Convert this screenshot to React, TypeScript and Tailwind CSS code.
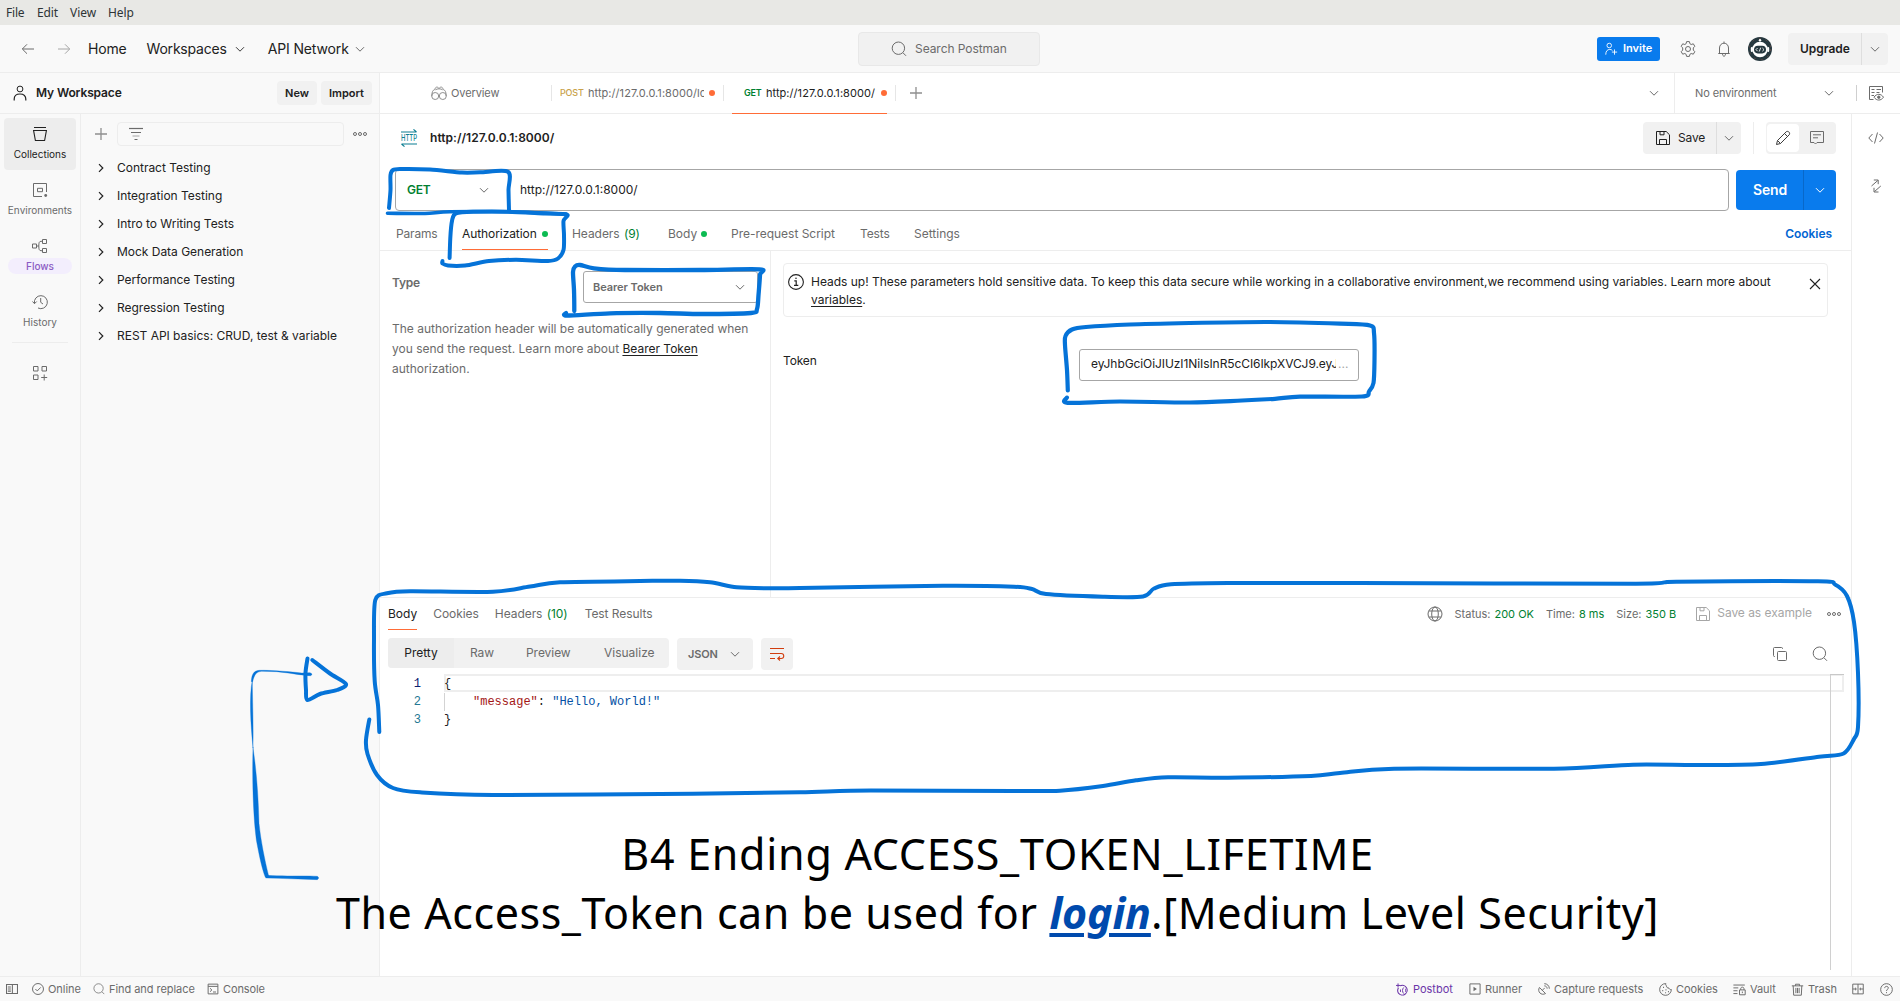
import type { ReactNode } from "react";

type Point = [number, number];

/* Smooth curve through a list of points (Catmull-Rom turned into Béziers). */
function curve(points: Point[]): string {
  let d = `M${points[0][0]} ${points[0][1]}`;
  for (let i = 0; i < points.length - 1; i++) {
    const a = points[Math.max(i - 1, 0)];
    const b = points[i];
    const c = points[i + 1];
    const e = points[Math.min(i + 2, points.length - 1)];
    const t = 7;
    d += ` C${(b[0] + (c[0] - a[0]) / t).toFixed(1)} ${(b[1] + (c[1] - a[1]) / t).toFixed(1)} ${(c[0] - (e[0] - b[0]) / t).toFixed(1)} ${(c[1] - (e[1] - b[1]) / t).toFixed(1)} ${c[0]} ${c[1]}`;
  }
  return d;
}

function Icon({ size = 16, className = "", children }: { size?: number; className?: string; children: ReactNode }) {
  return (
    <svg width={size} height={size} viewBox="0 0 16 16" fill="none" stroke="currentColor" strokeWidth={1} className={`shrink-0 ${className}`}>
      {children}
    </svg>
  );
}

const ChevronDown = ({ className = "" }: { className?: string }) => (
  <Icon className={className}><path d="M4 6.2 8 10.2 12 6.2" /></Icon>
);
const ChevronRight = () => (
  <Icon className="text-[#212121]"><path d="M6 4.2 9.8 8 6 11.8" strokeWidth={1.2} /></Icon>
);
const Plus = () => (
  <Icon className="text-[#8f8f8f]"><path d="M8 2v12M2 8h12" strokeWidth={1.3} /></Icon>
);
const Dots = ({ className = "" }: { className?: string }) => (
  <Icon className={className}><circle cx="3" cy="8" r="1.5" /><circle cx="8" cy="8" r="1.5" /><circle cx="13" cy="8" r="1.5" /></Icon>
);
const Magnifier = ({ size = 16, className = "" }: { size?: number; className?: string }) => (
  <Icon size={size} className={className}><circle cx="7.4" cy="7.2" r="6.2" /><path d="m12 11.8 3 3" /></Icon>
);
const Floppy = ({ className = "" }: { className?: string }) => (
  <Icon className={className}><path d="M1.5 1.5h9.7l3.3 3.3v9.7h-13zM5 1.5v3.3h4V1.5M4.5 14.5v-5h7v5" /></Icon>
);

const collections = [
  "Contract Testing",
  "Integration Testing",
  "Intro to Writing Tests",
  "Mock Data Generation",
  "Performance Testing",
  "Regression Testing",
  "REST API basics: CRUD, test & variable",
];

function MenuBar() {
  return (
    <div className="flex h-[25px] shrink-0 items-center bg-[#e8e8e5] pl-[6px] font-['Noto_Sans',sans-serif] text-xs text-[#2e3436]">
      <span className="w-[31px] tracking-[-0.2px]">File</span>
      <span className="w-[33px] tracking-[-0.1px]">Edit</span>
      <span className="w-[38px]">View</span>
      <span className="tracking-[-0.1px]">Help</span>
    </div>
  );
}

function TopNav() {
  return (
    <header className="flex h-12 shrink-0 items-center border-b border-[#ededed] bg-[#f9f9f9] text-[14px] text-[#212121]">
      <div className="flex w-[858px] items-center pl-5">
        <Icon className="text-[#6b6b6b]"><path d="M14 8H2.5M7 3.3 2.3 8 7 12.7" /></Icon>
        <Icon className="ml-5 text-[#a6a6a6]"><path d="M2 8h11.5M9 3.3 13.7 8 9 12.7" /></Icon>
        <span className="ml-4 tracking-[-0.18px]">Home</span>
        <span className="ml-5 tracking-[-0.2px]">Workspaces</span>
        <ChevronDown className="ml-[5px] text-[#3b3b3b]" />
        <span className="ml-5 tracking-[-0.14px]">API Network</span>
        <ChevronDown className="ml-[3px] text-[#6b6b6b]" />
      </div>
      <div className="flex h-[34px] w-[182px] items-center rounded border border-[#e8e8e8] bg-[#f1f1f1] pl-8 text-xs text-[#6b6b6b]">
        <Magnifier />
        <span className="ml-2 tracking-[-0.06px]">Search Postman</span>
      </div>
      <div className="flex flex-1 items-center justify-end pr-3">
        <div className="flex h-6 w-[63px] items-center rounded-[3px] bg-[#097bed] pl-[7px] text-[11px] font-semibold text-white">
          <Icon size={14} className="mr-[5px]">
            <circle cx="6" cy="4" r="2.6" /><path d="M2 14.5c0-4 1.8-6 4.6-6 1.3 0 2.3.4 3 1.2M12 8.5v6M9 11.5h6" />
          </Icon>
          Invite
        </div>
        <Icon className="ml-5 text-[#6b6b6b]">
          <path d="M6.6.6h2.8l.5 2.1 1.3.8 2.1-.7 1.5 2.500L13.300 6.900v2.200l1.500 1.600-1.500 2.500-2.100-.7-1.300.8-.5 2.100H6.600l-.5-2.100-1.300-.8-2.100.7-1.500-2.500L2.700 9.100V6.900L1.200 5.300l1.500-2.500 2.100.7 1.300-.8z" />
          <circle cx="8" cy="8" r="2.5" />
        </Icon>
        <Icon className="ml-5 text-[#6b6b6b]">
          <path d="M2.300 12.500h11.400M3.500 12.500V7C3.500 4.200 5.500 2.200 8 2.200s4.500 2 4.500 4.800v5.500M8 2.200V.5M6.500 12.800c0 3.200 3 3.200 3 0" />
        </Icon>
        <svg width="24" height="24" viewBox="0 0 24 24" className="ml-4">
          <circle cx="12" cy="12" r="12" fill="#26383f" />
          <circle cx="12" cy="12" r="10.7" fill="none" stroke="#7a5048" strokeWidth="0.6" strokeDasharray="2 5" />
          <circle cx="12" cy="12.500" r="7.800" fill="#fff" />
          <circle cx="12" cy="3.300" r="1.200" fill="#fff" />
          <rect x="2.800" y="10" width="2" height="5" rx="1" fill="#fff" />
          <rect x="19.200" y="10" width="2" height="5" rx="1" fill="#fff" />
          <rect x="6" y="8.800" width="12" height="7.600" rx="3.800" fill="#26383f" />
          <path d="m9.600 11-1.600 1.600 1.600 1.600M14.400 11l1.600 1.600-1.600 1.600M12.700 10.700l-1.400 3.800" fill="none" stroke="#fff" strokeWidth="0.900" />
        </svg>
        <div className="ml-4 flex h-8 w-[100px] items-center rounded bg-[#f1f1f1]">
          <span className="flex h-8 w-[74px] items-center border-r border-[#dedede] pl-3 text-xs font-semibold">Upgrade</span>
          <ChevronDown className="ml-[5px] text-[#6b6b6b]" />
        </div>
      </div>
    </header>
  );
}

function TabBar() {
  return (
    <div className="flex h-[41px] shrink-0 text-[11px] text-[#6b6b6b]">
      <div className="flex w-[380px] items-center border-r border-b border-[#ededed] bg-[#f9f9f9] pl-3 text-[#212121]">
        <Icon><circle cx="8" cy="4" r="2.900" /><path d="M2.200 15.500v-1.500c0-3.500 2.300-5 5.800-5s5.800 1.500 5.800 5v1.500" strokeWidth={1.200} /></Icon>
        <span className="ml-2 text-xs font-semibold tracking-[-0.12px]">My Workspace</span>
        <span className="mr-1 ml-auto flex h-6 w-10 items-center justify-center rounded bg-[#f1f1f1] font-semibold">New</span>
        <span className="mr-[7px] flex h-6 w-[51px] items-center justify-center rounded bg-[#f1f1f1] font-semibold">Import</span>
      </div>
      <div className="flex flex-1 items-center border-b border-[#ededed] bg-white">
        <div className="flex h-4 w-[172px] items-center border-r border-[#e6e6e6] pl-[51px]">
          <Icon className="mr-1 text-[#8f8f8f]">
            <path d="M.8 11c0-4 1-6 3-6.500M15.200 11c0-4-1-6-3-6.500M4 4.500C4 1.500 7 1.500 8 3.500c1-2 4-2 4 1M4.500 4.800c1.500-1.300 5.500-1.300 7 0" />
            <circle cx="4.200" cy="11" r="3.500" /><circle cx="11.800" cy="11" r="3.500" />
          </Icon>
          <span className="tracking-[-0.1px]">Overview</span>
        </div>
        <div className="flex h-4 w-[172px] items-center border-r border-[#e6e6e6] pl-2">
          <span className="w-[28px] text-[9px] font-medium tracking-[-0.15px] text-[#c9a24a]">POST</span>
          <span className="w-[116px] overflow-hidden whitespace-nowrap tracking-[0.050px]">http://127.0.0.1:8000/login</span>
          <span className="ml-[5px] size-1.5 rounded-full bg-[#ff6c37]" />
        </div>
        <div className="relative flex h-4 w-[172px] items-center border-r border-[#e6e6e6] pl-5">
          <span className="w-[22px] text-[9px] font-semibold tracking-[-0.2px] text-[#007f31]">GET</span>
          <span className="w-[110px] tracking-[0.050px] whitespace-nowrap text-[#212121]">http://127.0.0.1:8000/</span>
          <span className="ml-[5px] size-1.5 rounded-full bg-[#ff6c37]" />
          <span className="absolute top-[28px] left-2 h-px w-[155px] bg-[#ff6c37]" />
        </div>
        <span className="ml-3"><Plus /></span>
        <ChevronDown className="ml-auto text-[#6b6b6b]" />
        <div className="ml-3 flex h-10 w-[226px] items-center border-l border-[#ededed] pl-5">
          <span className="tracking-[-0.1px]">No environment</span>
          <ChevronDown className="ml-[45px]" />
          <span className="ml-[19px] h-4 w-px bg-[#cfcfcf]" />
          <Icon className="ml-[11px]">
            <path d="M5.500 14.500h-4v-13h13v6M3.500 4.500h3M8.500 4.500h4.500M3.500 7.500h3M8.500 7.500h3M3.500 10.500h2.500" />
            <path d="M6 12.200c2.500-3.800 7-3.800 9.500 0-2.500 3.800-7 3.800-9.500 0z" /><circle cx="10.800" cy="12.200" r="1.200" fill="currentColor" />
          </Icon>
        </div>
      </div>
    </div>
  );
}

function RailItem({ label, children }: { label: string; children: ReactNode }) {
  return (
    <div className="mb-1 flex h-[52px] w-[72px] flex-col items-center rounded pt-2">
      <Icon>{children}</Icon>
      <span className="mt-1 text-[10px] leading-4">{label}</span>
    </div>
  );
}

function LeftRail() {
  return (
    <nav className="flex w-[81px] shrink-0 flex-col items-center border-r border-[#ededed] bg-[#f9f9f9] pt-1 text-[#6b6b6b]">
      <div className="mb-1 flex h-[52px] w-[72px] flex-col items-center rounded bg-[#ededed] pt-2 text-[#212121]">
        <Icon><path d="M2 1.500h12M1 4.500h14M1.600 4.700 3.400 14.500h9.200l1.800-9.800" strokeWidth={1.100} /></Icon>
        <span className="mt-1 text-[10px] leading-4">Collections</span>
      </div>
      <RailItem label="Environments">
        <path d="M10 14.500H1.500v-13h13V10M5.500 6.300h5v3.400h-5z" /><circle cx="13.700" cy="13.500" r="1.400" fill="currentColor" stroke="none" />
      </RailItem>
      <div className="mb-1 flex h-[52px] w-[72px] flex-col items-center pt-2">
        <Icon><path d="M.5 6h4v4h-4zM10.500 1.500h4v4h-4zM10.500 10.500h4v4h-4zM10.500 3.300H9C7.300 3.300 6.800 4.500 6.800 8S7.300 12.700 9 12.700h1.500M4.500 8h2.300" /></Icon>
        <span className="mt-1 flex h-4 w-16 items-center justify-center rounded-full bg-[#f3eefd] text-[10px] font-medium text-[#8b5bc4]">Flows</span>
      </div>
      <RailItem label="History">
        <path d="M2.500 9.500A6.500 6.500 0 1 1 6 14M.5 7.500l2 2.200 2.200-2.200M8.700 4v4.300l2.300 1.700" />
      </RailItem>
      <div className="h-px w-14 bg-[#ededed]" />
      <Icon className="mt-[22px]"><path d="M1.500 1.500h4.500v4.500h-4.500zM10 1.500h4.500v4.500h-4.500zM1.500 10h4.500v4.500h-4.500zM12.200 9.500v6M9.200 12.500h6" /></Icon>
    </nav>
  );
}

function Sidebar() {
  return (
    <aside className="flex w-[299px] shrink-0 flex-col border-r border-[#ededed] bg-[#f9f9f9] text-xs text-[#212121]">
      <div className="mt-2 mb-2 flex h-6 items-center pl-3">
        <Plus />
        <div className="ml-2 flex h-6 w-[227px] items-center rounded-sm border border-[#ededed] pl-[10px]">
          <Icon className="text-[#6b6b6b]"><path d="M1 2.500h14" strokeWidth={1.200} /><path d="M3 6.500h10" /><path d="M4.500 10h7" stroke="#a6a6a6" /><path d="M6.500 13.500h3" /></Icon>
        </div>
        <Dots className="ml-2 text-[#6b6b6b]" />
      </div>
      {collections.map((name) => (
        <div key={name} className="flex h-7 items-center pl-3">
          <ChevronRight />
          <span className="ml-2 tracking-[-0.020px]">{name}</span>
        </div>
      ))}
    </aside>
  );
}

function RequestBuilder() {
  return (
    <>
      <div className="flex h-12 items-center pr-[15px] pl-[21px]">
        <svg width="16" height="18" viewBox="0 0 16 18" className="overflow-visible text-[#0b7d91]">
          <g fill="none" stroke="currentColor" strokeWidth="1.100">
            <path d="M0 3h15.500M12.500.3l3 2.700M16 15H.5M3.500 17.700l-3-2.700" />
          </g>
          <text x="0" y="12.300" fontSize="9" textLength="16" lengthAdjust="spacingAndGlyphs" fill="currentColor" className="font-['Inter'] font-medium">HTTP</text>
        </svg>
        <span className="ml-[13px] text-xs font-semibold tracking-[0.030px] text-[#212121]">http://127.0.0.1:8000/</span>
        <div className="ml-auto flex h-8 w-[98px] items-center rounded bg-[#f1f1f1] text-xs text-[#212121]">
          <span className="flex h-8 w-[74px] items-center border-r border-[#dedede] pl-3"><Floppy /><span className="ml-[7px] tracking-[-0.15px]">Save</span></span>
          <ChevronDown className="ml-1 text-[#6b6b6b]" />
        </div>
        <span className="mx-3 h-8 w-px bg-[#ededed]" />
        <div className="flex h-8 w-[70px] items-center rounded bg-[#f1f1f1] pl-px">
          <span className="flex h-7 w-8 items-center justify-center rounded bg-white text-[#3b3b3b]">
            <Icon><path d="M1.500 14.500 2.500 10.500 11.300 1.700c1.800-1.200 4.200 1 3 3L5.500 13.500zM9.500 3.500l3 3M2.500 10.500l3 3" /></Icon>
          </span>
          <Icon className="ml-[10px] text-[#6b6b6b]"><path d="M1.500 1.500h13v11H8l-1.500 1.500L5 12.500H1.500zM4 4.800h8M4 7.800h5" /></Icon>
        </div>
      </div>

      <div className="mt-[7px] flex h-[42px] items-center pr-[15px] pl-[15px]">
        <div className="flex h-[42px] w-[1334px] items-center rounded-[4px] border border-[#a6a6a6] bg-white">
          <span className="flex w-[95px] items-center pl-[11px] text-xs font-semibold tracking-[-0.300px] text-[#007f31]">GET<ChevronDown className="ml-[46px] text-[#6b6b6b]" /></span>
          <span className="ml-[29px] text-xs text-[#212121]">http://127.0.0.1:8000/</span>
        </div>
        <div className="ml-auto flex h-10 w-[100px] items-center rounded bg-[#097bed] text-white">
          <span className="flex h-10 w-[68px] items-center border-r border-[#0868c9] pl-[17px] text-sm font-semibold tracking-[-0.170px]">Send</span>
          <ChevronDown className="ml-2" />
        </div>
      </div>

      <div className="flex h-10 items-center border-b border-[#ededed] pt-[6px] pr-[19px] pl-4 text-xs text-[#6b6b6b]">
        <span className="w-[66px] tracking-[-0.170px]">Params</span>
        <span className="relative flex w-[110px] items-center">
          <span className="tracking-[-0.080px] text-[#212121]">Authorization</span>
          <span className="ml-[5px] size-1.5 rounded-full bg-[#0cbb52]" />
          <span className="absolute top-[23px] left-0 h-px w-[86px] bg-[#ff6c37]" />
        </span>
        <span className="w-[96px] tracking-[-0.060px]">Headers <span className="ml-px text-[#007f31]">(9)</span></span>
        <span className="flex w-[63px] items-center">Body<span className="ml-[4px] size-1.5 rounded-full bg-[#0cbb52]" /></span>
        <span className="w-[129px] tracking-[-0.020px]">Pre-request Script</span>
        <span className="w-[54px] tracking-[-0.100px]">Tests</span>
        <span>Settings</span>
        <span className="ml-auto font-semibold tracking-[-0.060px] text-[#0265d2]">Cookies</span>
      </div>
    </>
  );
}

function AuthPanel() {
  return (
    <div className="flex h-[346px] shrink-0">
      <div className="w-[391px] border-r border-[#ededed] pt-5 pl-3 text-xs text-[#6b6b6b]">
        <div className="flex h-8 justify-between pr-3">
          <span className="mt-1 font-semibold tracking-[-0.200px]">Type</span>
          <div className="flex w-[175px] items-center rounded-[3px] border border-[#a6a6a6] pl-[9px] text-[11px] font-semibold tracking-[-0.050px]">
            Bearer Token
            <ChevronDown className="ml-auto mr-[9px]" />
          </div>
        </div>
        <p className="mt-4 w-[366px] leading-5">
          The authorization header will be automatically generated when you send the request. Learn more about <span className="text-[#212121] underline underline-offset-2">Bearer Token</span> authorization.
        </p>
      </div>
      <div className="flex-1 pt-3 pl-3 text-xs text-[#212121]">
        <div className="flex h-[54px] w-[1045px] rounded border border-[#ededed] pt-[9px] pl-1">
          <Icon className="mt-px"><circle cx="8" cy="8" r="7.400" strokeWidth={1.100} /><path d="M6.300 6.800H8.200v4.500M6 11.400h4.300" strokeWidth={1.200} /><circle cx="8" cy="4.300" r=".8" fill="currentColor" stroke="none" /></Icon>
          <p className="ml-[7px] w-[970px] leading-[18px] tracking-[-0.017px]">
            Heads up! These parameters hold sensitive data. To keep this data secure while working in a collaborative environment,we recommend using variables. Learn more about <span className="underline underline-offset-2">variables</span>.
          </p>
          <Icon className="mt-[3px] mr-1 ml-auto"><path d="m3 3 10 10M13 3 3 13" strokeWidth={1.100} /></Icon>
        </div>
        <div className="mt-8 flex h-8 items-start">
          <span className="mt-1 w-[296px] tracking-[-0.160px]">Token</span>
          <div className="flex h-8 w-[280px] items-center rounded-[3px] border border-[#a6a6a6] bg-white pb-0.5 pl-[11px]">
            <span className="w-[245px] overflow-hidden whitespace-nowrap tracking-[-0.080px]">eyJhbGciOiJIUzI1NiIsInR5cCI6IkpXVCJ9.eyJ</span>
            <span className="ml-0.5 text-[#a6a6a6]">...</span>
          </div>
        </div>
      </div>
    </div>
  );
}

function ResponsePanel() {
  return (
    <section className="flex flex-1 flex-col border-t border-[#ededed] text-xs text-[#6b6b6b]">
      <div className="flex h-8 shrink-0 items-center pr-[9px] pl-2">
        <span className="relative mr-4 text-[#212121]">Body<span className="absolute top-[23px] left-0 h-px w-[29px] bg-[#ff6c37]" /></span>
        <span className="mr-4 tracking-[-0.050px]">Cookies</span>
        <span className="mr-[17px] tracking-[-0.060px]">Headers <span className="ml-px text-[#007f31]">(10)</span></span>
        <span className="tracking-[-0.070px]">Test Results</span>
        <div className="ml-auto flex items-center text-[11px]">
          <Icon className="mr-3">
            <circle cx="8" cy="8" r="7" /><ellipse cx="8" cy="8" rx="3.300" ry="7" /><path d="M1.800 5h12.400M1.800 11h12.400" />
          </Icon>
          Status:<span className="mr-3 ml-1 text-[#007f31]">200 OK</span>
          Time:<span className="mr-3 ml-1 text-[#007f31]">8 ms</span>
          Size:<span className="mr-[19px] ml-1 text-[#007f31]">350 B</span>
          <Floppy className="text-[#a6a6a6]" />
          <span className="-mt-0.5 ml-[6px] text-xs tracking-[-0.040px] text-[#a6a6a6]">Save as example</span>
          <Dots className="ml-[14px]" />
        </div>
      </div>

      <div className="mt-2 flex h-8 shrink-0 items-start pr-[23px] pl-2">
        <div className="flex h-[30px] items-center overflow-hidden rounded bg-[#f1f1f1]">
          <span className="flex h-[30px] w-[66px] items-center justify-center bg-[#ededed] text-[#212121]">Pretty</span>
          <span className="w-[56px] pl-4 tracking-[-0.050px]">Raw</span>
          <span className="w-[78px] pl-4 tracking-[-0.050px]">Preview</span>
          <span className="w-[81px] pl-4">Visualize</span>
        </div>
        <div className="ml-2 flex h-8 w-[76px] items-center rounded bg-[#f1f1f1] pl-[11px] text-[11px] font-semibold tracking-[-0.200px]">
          JSON<ChevronDown className="ml-[9px]" />
        </div>
        <div className="ml-2 flex h-8 w-8 items-center justify-center rounded bg-[#f1f1f1] text-[#d13d0e]">
          <Icon><path d="M1 2.500h14M1 7.500h11.200c3.400 0 3.400 5 0 5H9M1 12.500h5M11 10.500l-2.200 2 2.200 2" strokeWidth={1.100} /></Icon>
        </div>
        <Icon className="mt-2 ml-auto"><rect x="5.500" y="5.500" width="9" height="9" rx="1" /><path d="M3 10.500H2.500a1 1 0 0 1-1-1v-7a1 1 0 0 1 1-1h7a1 1 0 0 1 1 1V3" /></Icon>
        <Magnifier className="mt-2 ml-6" />
      </div>

      <div className="mt-1 flex flex-1 font-['Liberation_Mono',monospace] leading-[18px]">
        <div className="w-11 pt-px pr-[3px] text-right text-[#237893]">
          <div className="text-[#0b216f]">1</div>
          <div>2</div>
          <div>3</div>
        </div>
        <div className="relative ml-5 w-[1400px] pt-px text-[#212121]">
          <div className="absolute top-0 left-0 h-[18px] w-[1400px] border-2 border-[#eeeeee]" />
          <div className="relative whitespace-pre">{"{"}</div>
          <div className="relative h-[18px] border-l border-[#d3d3d3] pl-[28px] whitespace-pre"><span className="text-[#a31515]">"message"</span>: <span className="text-[#0451a5]">"Hello, World!"</span></div>
          <div className="whitespace-pre">{"}"}</div>
          <div className="absolute top-0 left-[1386px] h-[296px] w-px bg-[#d0d0d0]" />
          <div className="absolute top-0 left-[1386px] h-px w-[14px] bg-[#c8c8c8]" />
        </div>
      </div>
    </section>
  );
}

function StatusBar() {
  return (
    <footer className="flex h-[25px] shrink-0 items-center border-t border-[#ededed] bg-[#f9f9f9] pr-[7px] pl-[6px] text-[11px] text-[#6b6b6b]">
      <Icon size={12}><path d="M.7 2h14.600v12H.7zM8.500 2v12M2.500 5.200h4M2.500 8h4M2.500 10.800h4" strokeWidth={1.400} /></Icon>
      <Icon size={12} className="mr-1 ml-[14px]"><circle cx="8" cy="8" r="7.300" strokeWidth={1.300} /><path d="m4.500 8 2.500 2.500 4.700-4.700" strokeWidth={1.300} /></Icon>
      <span className="w-[45px] tracking-[-0.050px]">Online</span>
      <Magnifier size={12} className="mr-1" />
      <span className="w-[98px] tracking-[-0.050px]">Find and replace</span>
      <Icon size={12} className="mr-[4px]"><path d="M1.500 1.500h13v13h-13zM1.500 4.500h13M4 7l2.500 2.300L4 11.600M8 12h4" strokeWidth={1.300} /></Icon>
      <span className="tracking-[-0.100px]">Console</span>

      <div className="ml-auto flex items-center">
        <Icon size={13} className="mr-[4px] text-[#6b35a8]">
          <path d="M5 3.500A6 6 0 1 1 3 12.500C1.800 10.500 1.800 8 3 6" strokeWidth={1.300} /><path d="M9.500 5.500C7.500 7.500 7.500 11 9.500 13M12 7v4M2.500.5v5M0 3h5M5.500 8v3" strokeWidth={1.200} />
        </Icon>
        <span className="w-[56px] text-[#6b35a8]">Postbot</span>
        <Icon size={12} className="mr-[4px]"><path d="M1.200 1.200h13.600v13.600H1.200z" strokeWidth={1.300} /><path d="M6 5v6l4.500-3z" fill="currentColor" stroke="none" /></Icon>
        <span className="w-[52px]">Runner</span>
        <Icon size={13} className="mr-[4px]"><path d="M3 5.500c-3 5 2 10.500 7.500 7.500zM6.500 9l3-3M9 3.500c2 0 3.500 1.500 3.500 3.500M9 .8c3.500 0 6.200 2.700 6.200 6.200" strokeWidth={1.200} /></Icon>
        <span className="w-[105px] tracking-[-0.030px]">Capture requests</span>
        <Icon size={13} className="mr-1"><path d="M8.500.8A7.200 7.200 0 1 0 15.200 8c-1.500.3-2.700-.4-2.900-1.800-2 .2-3.300-1-3-2.700C8 3 8 2 8.500.8z" strokeWidth={1.200} /><path d="M5 5.500h1.200M4 9.500h1.200M8 8.500h1.200M7.500 12h1.200M11 10.500h1.200" strokeWidth={1.500} /></Icon>
        <span className="w-[57px] tracking-[-0.050px]">Cookies</span>
        <Icon size={13} className="mr-1"><path d="M.5 2.500h14M.5 6h6M.5 9.500h5M.5 13h5M8 8.500h7v6H8zM9.500 8.500V7c0-2.500 4-2.500 4 0v1.500M11.500 10.500v2" strokeWidth={1.200} /></Icon>
        <span className="w-[41px] tracking-[-0.100px]">Vault</span>
        <Icon size={13} className="mr-1"><path d="M1 3.500h14M5.500 3.500v-2h5v2M2.700 3.500l.6 11.500h9.400l.6-11.500M6 6v6.500M8 6v6.500M10 6v6.500" strokeWidth={1.200} /></Icon>
        <span className="w-[44px]">Trash</span>
        <Icon size={12} className="mr-4"><path d="M1 1.500h14v13H1zM8 1.500v13M1 8h4.500M15 8h-4.500M4 6.300 5.800 8 4 9.700M12 6.300 10.200 8l1.800 1.700" strokeWidth={1.300} /></Icon>
        <Icon size={13}><circle cx="8" cy="8" r="7.200" strokeWidth={1.200} /><path d="M5.800 6.300c0-3 4.500-2.700 4.500-.2C10.300 7.700 8 7.800 8 9.800M8 11.200v1.300" strokeWidth={1.200} /></Icon>
      </div>
    </footer>
  );
}

const responseOutline: Point[] = [
  [379.3, 732], [378, 705], [374.7, 681], [374, 640], [375.3, 600], [387, 593.3], [410, 591.3], [493, 591.7], [530, 586.500], [560, 582.3], [640, 581], [680, 580.7], [710, 582.3],
  [736.7, 587.3], [770, 588.3], [800, 588], [943, 585.7], [1014, 586.7], [1032, 589], [1046, 594], [1103, 596.7], [1143, 596.5], [1154, 588.5], [1171, 584.3], [1228, 583], [1360, 583],
  [1636, 583.7], [1676, 581.7], [1818, 581.3], [1835, 584.5], [1847, 596], [1854, 622], [1858, 673], [1858, 727], [1854, 739], [1843.6, 753.5], [1819, 756.7], [1761, 764], [1697, 765],
  [1633, 764.7], [1554, 768.7], [1394, 768.7], [1340, 773], [1311, 776], [1228, 777.7], [1168, 777.3], [1136, 780.3], [1103, 786], [1060, 790.7], [1014, 791], [871, 790.5], [800, 792.3],
  [693, 793.7], [493, 795], [420, 792.3], [393, 788], [377, 775], [367.5, 754], [366, 740], [369.3, 719.5],
];

function Annotations() {
  return (
    <svg width="1900" height="1001" viewBox="0 0 1900 1001" fill="none" stroke="#0573d8" strokeWidth="4" strokeLinecap="round" strokeLinejoin="round" className="pointer-events-none absolute top-0 left-0">
      <path d={curve([[389, 208], [390.500, 190], [390.500, 175], [393, 170], [400, 169], [430, 169.500], [462, 172.500], [480, 172.300], [508, 171.700], [508.500, 190], [509, 210]])} />
      <path d={curve([[387.500, 213.300], [425, 213.500], [450, 211.700], [508, 211.800], [566, 214]])} strokeWidth="3.600" />
      <path d={curve([[449.600, 258], [450.300, 238], [452, 221], [456, 213.300], [475, 211.700], [508, 211.700], [545, 213.500], [567, 214.500], [563.500, 221], [564, 235], [563.500, 250], [558, 258.500], [548, 261], [516, 259.800], [489, 261], [465, 265.500], [448, 265.500], [442.500, 263.500], [442.500, 261]])} />
      <path d={curve([[574.300, 311], [574, 290], [573, 272], [575, 266.500], [580, 265], [594, 268.300], [625, 270], [700, 270], [759.500, 269.300], [760, 275], [758.500, 295], [757, 309], [751, 313], [702, 314], [660, 313], [610, 313.300], [567, 315.500], [566, 313]])} strokeWidth="4.300" />
      <path d={curve([[1067.800, 390.500], [1067, 370], [1065, 345], [1065.500, 336], [1072, 329.500], [1086, 327], [1130, 324.500], [1190, 323], [1270, 322], [1340, 323.700], [1370, 325.500], [1374, 333], [1374.500, 360], [1373.500, 383], [1369, 391.500], [1362, 396.500], [1300, 396.700], [1275, 398.800], [1242, 400.500], [1190, 402.500], [1120, 401.500], [1067.500, 402.800], [1067, 397.500]])} strokeWidth="4.200" />
      <path d={curve(responseOutline)} />
      <path d={curve([[307.500, 658.500], [305.500, 673], [306, 690], [307.300, 700], [320, 694], [337, 690], [346, 684], [330, 673.500], [312.300, 660]])} />
      <g transform="translate(220 630) scale(0.3333)" fill="#0573d8" stroke="#0573d8" strokeWidth="1">
        <path d="M270 128Q281 132 272 137C250 137 220 130 170 125L125 124C108 126 103 134 98 155L94 155C95 135 100 122 118 121C150 120 210 125 245 129Z" />
        <path d="M97 150C87 200 92 280 99 354C101 300 97 200 97 150Z" />
        <path d="M99 352C96 450 100 560 109 630C118 680 127 720 136 742L146 738C134 690 122 630 117 580C115 500 110 430 100 360Z" />
        <path d="M138 736C190 740 250 736 292 739Q300 744 292 749C240 748 190 745 138 744Z" />
      </g>
    </svg>
  );
}

function Caption() {
  return (
    <div className="absolute top-[824px] left-[297px] w-[1401px] text-center font-['Noto_Sans',sans-serif] text-[43px] leading-[59px] whitespace-nowrap text-black">
      <div className="tracking-[0.730px]">B4 Ending ACCESS_TOKEN_LIFETIME</div>
      <div className="tracking-[0.580px]">
        The Access_Token can be used for{" "}
        <span className="font-bold tracking-[-0.200px] text-[#004aad] italic underline decoration-4 underline-offset-[4px]">login</span>
        .[Medium Level Security]
      </div>
    </div>
  );
}

export default function App() {
  return (
    <div className="relative flex h-[1001px] w-[1900px] flex-col overflow-hidden bg-white font-['Inter',sans-serif]">
      <MenuBar />
      <TopNav />
      <TabBar />
      <div className="flex min-h-0 flex-1">
        <LeftRail />
        <Sidebar />
        <main className="flex w-[1472px] shrink-0 flex-col border-r border-[#ededed] bg-white">
          <RequestBuilder />
          <AuthPanel />
          <ResponsePanel />
        </main>
        <div className="flex flex-1 flex-col items-center pt-4 text-[#6b6b6b]">
          <Icon><path d="M4.500 4 .8 8l3.700 4M11.500 4l3.700 4-3.700 4M9.500 2.500l-3 11" /></Icon>
          <Icon className="mt-8"><path d="M3.500 8 9.800 2.500M5.800 2h4.400v4.200M12.800 8l-6.300 5.500M10.500 14H6V9.800" /></Icon>
        </div>
      </div>
      <StatusBar />
      <Annotations />
      <Caption />
    </div>
  );
}
